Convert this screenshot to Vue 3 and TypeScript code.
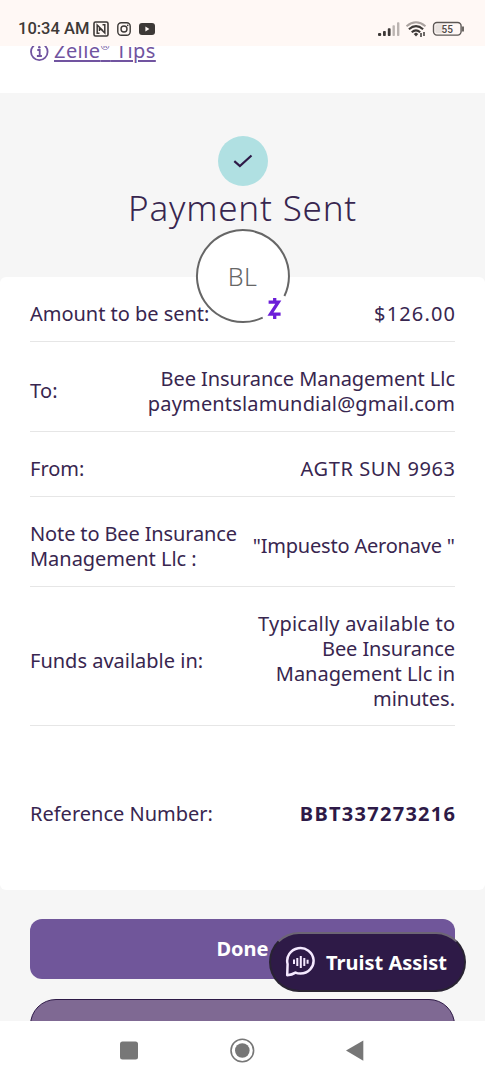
<script setup lang="ts">
interface Line {
  text: string
  tracking: number
}

interface Detail {
  key: string
  label: Line[]
  value: Line[]
}

const line = (text: string, tracking = 0): Line => ({ text, tracking })

const details: Detail[] = [
  { key: 'amount', label: [line('Amount to be sent:', -0.03)], value: [line('$126.00', 1.15)] },
  {
    key: 'to',
    label: [line('To:', 0.2)],
    value: [line('Bee Insurance Management Llc', -0.05), line('paymentslamundial@gmail.com', 0.17)],
  },
  { key: 'from', label: [line('From:')], value: [line('AGTR SUN 9963', 0.58)] },
  {
    key: 'note',
    label: [line('Note to Bee Insurance', -0.13), line('Management Llc :', -0.03)],
    value: [line('"Impuesto Aeronave "', -0.2)],
  },
  {
    key: 'funds',
    label: [line('Funds available in:')],
    value: [
      line('Typically available to', 0.22),
      line('Bee Insurance', -0.1),
      line('Management Llc in'),
      line('minutes.'),
    ],
  },
  { key: 'reference', label: [line('Reference Number:')], value: [line('BBT337273216', 1.28)] },
]

const lineStyle = (l: Line) => ({
  letterSpacing: `${l.tracking}px`,
  marginRight: `${-l.tracking}px`,
})
</script>

<template>
  <div class="screen">
    <header class="status">
      <span class="clock">10:34 AM</span>
      <svg class="notif" width="63" height="16" viewBox="0 0 63 16" fill="none">
        <rect x="1" y="1" width="14" height="14" rx="1.500" stroke="#3d3937" stroke-width="1.600" />
        <path d="M6.500 12.300H4.200V4L10 9.800M6.500 6.500V10M9.500 3.800H11.800V12L7 7.200" stroke="#3d3937" stroke-width="1.500" />
        <rect x="24.800" y="1.800" width="12.400" height="12.400" rx="3.500" stroke="#3d3937" stroke-width="1.400" />
        <circle cx="31" cy="8" r="3" stroke="#3d3937" stroke-width="1.400" />
        <circle cx="34.700" cy="4.400" r=".8" fill="#3d3937" />
        <rect x="46" y="2" width="16" height="12" rx="3" fill="#3d3937" />
        <path d="M52.400 5.600v4.800l4-2.400z" fill="#fff8f5" />
      </svg>
      <svg class="signal" width="88" height="18" viewBox="0 0 88 18" fill="none">
        <g fill="#3d3937">
          <rect x="1" y="13" width="3.200" height="3" rx="1" />
          <rect x="6" y="11" width="2.800" height="5" rx=".8" />
          <rect x="10.800" y="8.200" width="2.800" height="7.800" rx=".8" />
        </g>
        <g fill="#bbb4b1">
          <rect x="15.500" y="5.200" width="2.400" height="10.800" rx=".8" />
          <rect x="20" y="2.200" width="2.400" height="13.800" rx=".8" />
        </g>
        <path d="M29.500 6.200Q39 -1.500 48.500 6.200" stroke="#aaa29f" stroke-width="1.900" />
        <path d="M31.900 9.200Q39 3.200 46.100 9.200M34.700 12.200Q39 8.600 43.200 12.200" stroke="#3d3937" stroke-width="2.100" />
        <path d="M36.700 14l2.300-1.500 2.300 1.500-2.300 2.600z" fill="#3d3937" />
        <path d="M44 13v4M47 12v4" stroke="#3d3937" stroke-width="1.500" />
        <rect x="56.500" y="2.500" width="27.600" height="12.600" rx="3.500" stroke="#5c5755" stroke-width="1.400" />
        <rect x="58.300" y="4.300" width="8" height="9" rx="2" fill="#e8e2df" />
        <path d="M86 6.500v5" stroke="#5c5755" stroke-width="1.800" />
        <text x="70.200" y="12.500" text-anchor="middle" class="battery">55</text>
      </svg>
    </header>

    <main class="page">
      <section class="tips">
        <svg width="20" height="20" viewBox="0 0 20 20" fill="none">
          <circle cx="10.300" cy="10.800" r="8.300" stroke="#7154a0" stroke-width="1.800" />
          <path d="M8.300 9h2.400v6M7.900 15h5" stroke="#7154a0" stroke-width="1.800" />
          <circle cx="10.300" cy="6.300" r="1.300" fill="#7154a0" />
        </svg>
        <a class="tips-link">Zelle<sup>®</sup> Tips</a>
      </section>

      <section class="hero">
        <div class="check">
          <svg width="20" height="14" viewBox="0 0 20 14" fill="none">
            <path d="M1.300 7.200l5.600 4.900L18.500 1.500" stroke="#2e1a47" stroke-width="2.200" />
          </svg>
        </div>
        <h1>Payment Sent</h1>
      </section>

      <section class="card">
        <svg class="avatar" width="96" height="96" viewBox="0 0 96 96">
          <circle cx="48" cy="48" r="46" fill="#fff" />
          <path d="M67.700 89.600A46 46 0 1 1 89.400 68" fill="none" stroke="#666" stroke-width="2" />
          <text x="47.500" y="58" text-anchor="middle" class="initials">BL</text>
          <path d="M73.600 74.200H83.300L75.500 86.200H85.600M79.700 70V75M79.700 86V91" fill="none" stroke="#6b1ed8" stroke-width="3.300" />
        </svg>
        <div v-for="d in details" :key="d.key" class="row" :class="d.key">
          <div class="label">
            <span v-for="l in d.label" :key="l.text" :style="lineStyle(l)">{{ l.text }}</span>
          </div>
          <div class="value">
            <span v-for="l in d.value" :key="l.text" :style="lineStyle(l)">{{ l.text }}</span>
          </div>
        </div>
      </section>

      <section class="actions">
        <button class="done">Done</button>
        <button class="secondary"></button>
      </section>
    </main>

    <button class="assist">
      <svg width="32" height="32" viewBox="0 0 32 32" fill="none" stroke="#f5e9ff">
        <path d="M3.200 29.200L3.600 18A13.200 12.800 0 1 1 16.500 27.600Q13.500 27.600 11.500 26.600Q8 28.800 3.200 29.200Z" stroke-width="2.500" stroke-linejoin="round" />
        <path d="M10 13.500v4.500M13.300 12v8M16.800 10v12M20.300 12v8M23.600 13.800v4" stroke-width="2" />
      </svg>
      <span>Truist Assist</span>
    </button>

    <nav class="nav">
      <svg width="485" height="59" viewBox="0 0 485 59">
        <rect x="120" y="20.500" width="18" height="18" rx="2.500" fill="#777" />
        <circle cx="242.300" cy="29.500" r="11.300" fill="none" stroke="#777" stroke-width="1.600" />
        <circle cx="242.300" cy="29.500" r="7.300" fill="#777" />
        <path d="M346 29.500L363.300 19.500V39.800z" fill="#777" />
      </svg>
    </nav>
  </div>
</template>

<style>
body {
  margin: 0;
}
</style>

<style scoped>
.screen {
  position: relative;
  display: flex;
  flex-direction: column;
  width: 485px;
  height: 1080px;
  overflow: hidden;
  background: #fff;
  color: #38264f;
  font-family: 'Noto Sans', 'Open Sans', sans-serif;
}

.status {
  display: flex;
  align-items: flex-start;
  flex: none;
  box-sizing: border-box;
  height: 46px;
  padding: 20px 20px 0 18px;
  background: #fff8f5;
  color: #3d3937;
}

.clock {
  width: 75px;
  margin-top: -1px;
  font: 500 16.500px/20px Roboto, sans-serif;
  white-space: nowrap;
}

.notif {
  margin-top: 1px;
}

.signal {
  margin-left: auto;
}

.battery {
  font: 500 10px Roboto, sans-serif;
  fill: #4d4846;
}

.page {
  flex: 1;
  min-height: 0;
  overflow: hidden;
  background: #f6f6f6;
}

.tips {
  display: flex;
  box-sizing: border-box;
  height: 47px;
  padding-left: 29px;
  gap: 5px;
  background: #fff;
  color: #7154a0;
}

.tips svg {
  margin-top: -5px;
}

.tips-link {
  margin-top: -9px;
  font-size: 20px;
  line-height: 28px;
  letter-spacing: 0.450px;
  text-decoration: underline;
  text-decoration-thickness: 1.500px;
  text-underline-offset: 2px;
}

.tips-link sup {
  font-size: 11px;
  line-height: 0;
}

.hero {
  display: flex;
  flex-direction: column;
  align-items: center;
  height: 183.500px;
}

.check {
  display: flex;
  align-items: center;
  justify-content: center;
  width: 50px;
  height: 50px;
  margin-top: 43px;
  border-radius: 50%;
  background: #b0e0e2;
}

h1 {
  margin: 0;
  font-size: 35px;
  font-weight: 300;
  line-height: 44px;
  letter-spacing: 0.800px;
  white-space: nowrap;
}

.card {
  position: relative;
  box-sizing: border-box;
  height: 613px;
  padding: 0 30px;
  border-radius: 6px;
  background: #fff;
}

.avatar {
  position: absolute;
  top: -49px;
  left: 195px;
}

.initials {
  font-family: 'Noto Sans', sans-serif;
  font-size: 25px;
  font-weight: 300;
  letter-spacing: 0.500px;
  fill: #666;
}

.row {
  display: flex;
  align-items: center;
  justify-content: space-between;
  padding: 24px 0 15px;
  border-bottom: 1px solid #e6e6e6;
  font-size: 20px;
  line-height: 25px;
  white-space: nowrap;
}

.row span {
  display: block;
}

.value {
  text-align: right;
}

.row.funds {
  padding-bottom: 14px;
}

.row.reference {
  padding-top: 75px;
  border-bottom: 0;
}

.reference .value {
  color: #2e1a47;
  font-weight: 700;
}

.actions {
  display: flex;
  flex-direction: column;
  gap: 20px;
  padding: 29px 30px 0;
}

button {
  border: 0;
  color: #fff;
  font: 700 20px/25px 'Noto Sans', sans-serif;
}

.done {
  height: 60px;
  border-radius: 12px;
  background: #70569a;
}

.secondary {
  height: 60px;
  border: 1px solid #2e1a47;
  border-radius: 26px;
  background: #7f6993;
}

.assist {
  position: absolute;
  top: 932px;
  left: 269px;
  display: flex;
  align-items: center;
  gap: 10px;
  width: 197px;
  height: 60px;
  padding: 0 0 0 13px;
  border: 2px solid #292333;
  border-top-color: #6d6575;
  border-radius: 30px;
  background: #2e1a47;
  white-space: nowrap;
}

.nav {
  flex: none;
  height: 59px;
  background: #fff;
}
</style>
